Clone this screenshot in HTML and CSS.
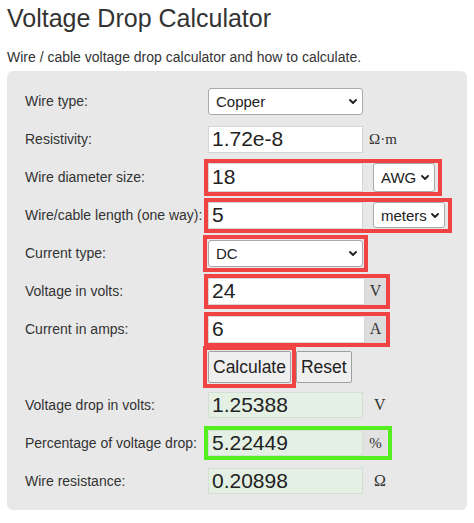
FILE: index.html
```html
<!DOCTYPE html>
<html lang="en">
<head>
<meta charset="utf-8">
<title>Voltage Drop Calculator</title>
<link rel="stylesheet" href="styles.css">
</head>
<body>
<h1 class="title">Voltage Drop Calculator</h1>
<p class="intro">Wire / cable voltage drop calculator and how to calculate.</p>
<form class="panel">
  <label class="lbl">Wire type:</label>
  <div class="ctl"><span class="selwrap"><select class="sel sel-wide"><option>Copper</option></select><svg class="chev" viewBox="0 0 8 5" aria-hidden="true"><path d="M1 1 L4 4 L7 1" /></svg></span></div>

  <label class="lbl">Resistivity:</label>
  <div class="ctl"><input class="field" type="text" value="1.72e-8"><span class="unit unit-res">Ω·m</span></div>

  <label class="lbl">Wire diameter size:</label>
  <div class="ctl"><span class="hl hl-red hl-pad"><input class="field field-tall" type="text" value="18"><span class="selwrap sel-gap"><select class="sel sel-awg"><option>AWG</option></select><svg class="chev" viewBox="0 0 8 5" aria-hidden="true"><path d="M1 1 L4 4 L7 1" /></svg></span></span></div>

  <label class="lbl">Wire/cable length (one way):</label>
  <div class="ctl"><span class="hl hl-red hl-pad"><input class="field" type="text" value="5"><span class="selwrap sel-gap"><select class="sel sel-len"><option>meters</option></select><svg class="chev" viewBox="0 0 8 5" aria-hidden="true"><path d="M1 1 L4 4 L7 1" /></svg></span></span></div>

  <label class="lbl">Current type:</label>
  <div class="ctl"><span class="hl hl-red hl-off"><span class="selwrap"><select class="sel sel-wide"><option>DC</option></select><svg class="chev" viewBox="0 0 8 5" aria-hidden="true"><path d="M1 1 L4 4 L7 1" /></svg></span></span></div>

  <label class="lbl">Voltage in volts:</label>
  <div class="ctl"><span class="hl hl-red"><input class="field field-addon" type="text" value="24"><span class="addon">V</span></span></div>

  <label class="lbl">Current in amps:</label>
  <div class="ctl"><span class="hl hl-red"><input class="field field-addon" type="text" value="6"><span class="addon">A</span></span></div>

  <span class="lbl"></span>
  <div class="ctl btns"><span class="hl hl-red hl-off"><button type="button" class="btn">Calculate</button></span><button type="button" class="btn">Reset</button></div>

  <label class="lbl">Voltage drop in volts:</label>
  <div class="ctl"><output class="out">1.25388</output><span class="unit unit-out">V</span></div>

  <label class="lbl">Percentage of voltage drop:</label>
  <div class="ctl"><span class="hl hl-green"><output class="out">5.22449</output><span class="addon addon-out">%</span></span></div>

  <label class="lbl">Wire resistance:</label>
  <div class="ctl"><output class="out">0.20898</output><span class="unit unit-out">Ω</span></div>
</form>
</body>
</html>
```

FILE: styles.css
```css
* { box-sizing: border-box; }

body {
  margin: 0;
  padding: 0 7px;
  font-family: "Liberation Sans", Arial, sans-serif;
  color: #333;
  background: #fff;
}

.title {
  margin: 4px 0 0;
  font-size: 25px;
  line-height: 29px;
  font-weight: normal;
  color: #333;
}

.intro {
  margin: 16px 0 6px;
  font-size: 14px;
  line-height: 16px;
  color: #333;
}

.panel {
  display: grid;
  grid-template-columns: 183px 1fr;
  grid-auto-rows: 38px;
  align-items: center;
  width: 460px;
  padding: 11px 0 10px 18px;
  background: #e8e8e8;
  border-radius: 6px;
}

.lbl {
  font-size: 14px;
  color: #333;
}

.ctl {
  display: flex;
  align-items: center;
}

.field {
  width: 155px;
  height: 27px;
  margin: 0;
  padding: 0 3px;
  border: 1px solid #d6d6d6;
  background: #fff;
  font-family: "Liberation Sans", Arial, sans-serif;
  font-size: 21px;
  color: #222;
  outline: none;
}

.field-tall { height: 29px; }

.field-addon { width: 157px; }

.selwrap {
  position: relative;
  display: inline-flex;
}

.sel-gap { margin-left: 10px; }

.sel {
  -webkit-appearance: none;
  appearance: none;
  height: 27px;
  margin: 0;
  padding: 0 16px 0 7px;
  border: 1px solid #a9a9a9;
  border-radius: 3px;
  background: #fff;
  font-family: "Liberation Sans", Arial, sans-serif;
  font-size: 15px;
  color: #222;
}

.sel-wide { width: 155px; }

.sel-awg { width: 62px; height: 29px; }

.sel-len { width: 72px; height: 26px; }

.chev {
  position: absolute;
  right: 6px;
  top: 50%;
  width: 8px;
  height: 5px;
  margin-top: -2px;
  fill: none;
  stroke: #222;
  stroke-width: 1.8;
  stroke-linecap: round;
  stroke-linejoin: round;
  pointer-events: none;
}

.unit {
  font-family: "Liberation Serif", "Times New Roman", serif;
  color: #333;
}

.unit-res { margin-left: 6px; font-size: 15px; }

.unit-out { margin-left: 11px; font-size: 16px; }

.addon {
  display: flex;
  align-items: center;
  justify-content: center;
  width: 21px;
  align-self: stretch;
  background: #dcdcdc;
  font-family: "Liberation Serif", "Times New Roman", serif;
  font-size: 16px;
  color: #333;
}

.addon-out {
  width: 25px;
  background: #e2e2e2;
  font-size: 15px;
}

.hl {
  display: inline-flex;
  align-items: center;
}

.hl-pad { padding-right: 3px; }

.hl-red {
  outline: 4px solid #f04444;
  outline-offset: 0;
}

.hl-off { outline-offset: 1px; }

.hl-green {
  outline: 4px solid #55ee1e;
  outline-offset: 0;
}

.btns { gap: 5px; }

.btn {
  height: 32px;
  margin: 0;
  padding: 0 4px;
  border: 1px solid #a0a0a0;
  border-radius: 2px;
  background: #efefef;
  font-family: "Liberation Sans", Arial, sans-serif;
  font-size: 17.5px;
  color: #222;
}

.out {
  display: flex;
  align-items: center;
  width: 155px;
  height: 26px;
  padding: 0 3px;
  border: 1px solid #d3dfd3;
  background: #e3f0e3;
  font-size: 21px;
  color: #222;
}
```
